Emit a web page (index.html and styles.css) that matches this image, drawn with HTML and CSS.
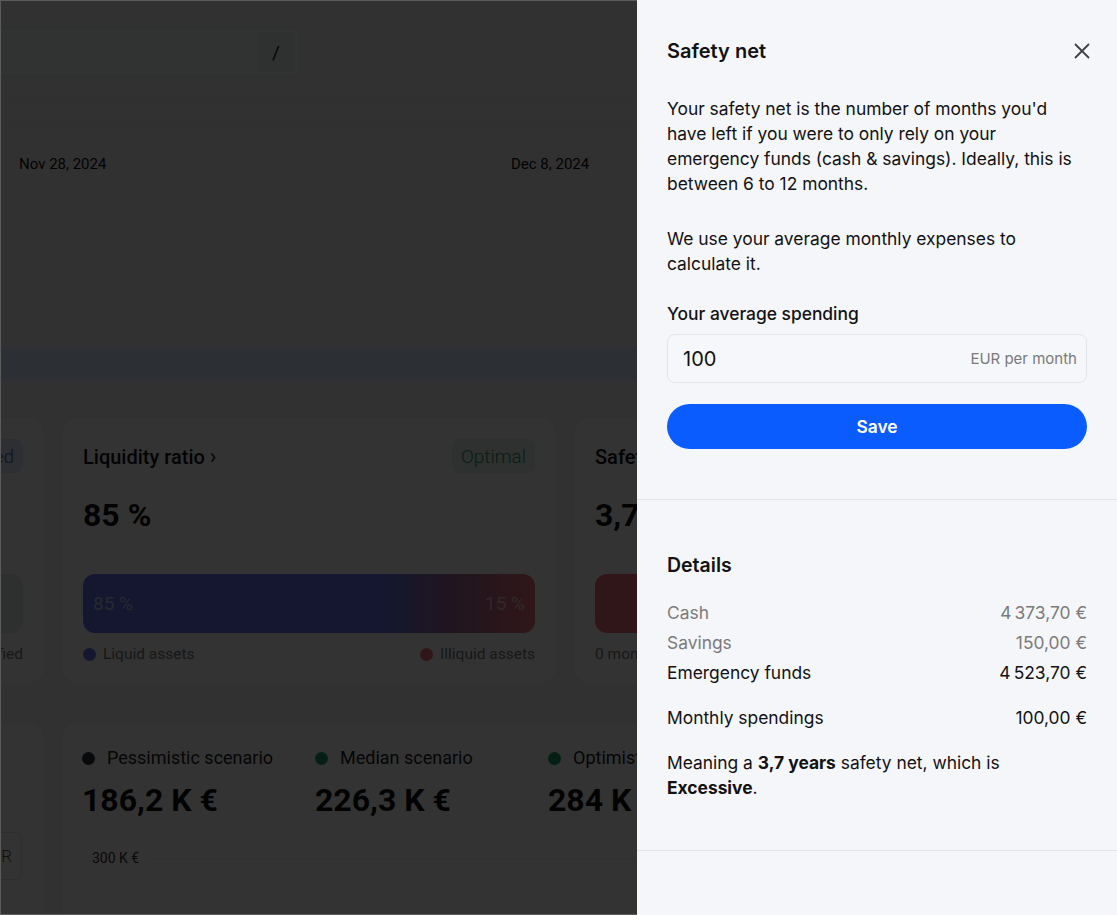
FILE: index.html
```html
<!DOCTYPE html>
<html lang="en">
<head>
<meta charset="utf-8">
<title>Safety net</title>
<link rel="stylesheet" href="styles.css">
</head>
<body>
<div class="page">
  <header class="topbar">
    <div class="search"><span class="kbd">/</span></div>
  </header>
  <section class="chart">
    <div class="chart-band"></div>
    <div class="axis"><span>Nov 28, 2024</span><span>Dec 8, 2024</span></div>
  </section>
  <div class="banner"></div>

  <div class="row row1">
    <div class="card metric">
      <div class="metric-head"><span class="metric-title">Diversification ›</span><span class="badge badge-blue">Diversified</span></div>
      <div class="metric-value">72 %</div>
      <div class="bar bar-gray"></div>
      <div class="legend"><span class="leg"><i class="dot dot-gray"></i>Diversified</span><span class="leg"><i class="dot dot-gray"></i>Unclassified</span></div>
    </div>
    <div class="card metric">
      <div class="metric-head"><span class="metric-title">Liquidity ratio <span class="chev">›</span></span><span class="badge badge-green">Optimal</span></div>
      <div class="metric-value">85 %</div>
      <div class="bar bar-liq"><span>85 %</span><span>15 %</span></div>
      <div class="legend"><span class="leg"><i class="dot dot-blue"></i>Liquid assets</span><span class="leg"><i class="dot dot-red"></i>Illiquid assets</span></div>
    </div>
    <div class="card metric">
      <div class="metric-head"><span class="metric-title">Safety net <span class="chev">›</span></span><span class="badge badge-green">Excessive</span></div>
      <div class="metric-value">3,7 years</div>
      <div class="bar bar-red"></div>
      <div class="legend"><span class="leg">0 months</span><span class="leg">12 months</span></div>
    </div>
  </div>

  <div class="row row2">
    <div class="card side">
      <div class="side-btn">EUR</div>
    </div>
    <div class="card wide">
      <div class="scenarios">
        <div class="scenario"><div class="sc-label"><i class="dot dot-dark"></i>Pessimistic scenario</div><div class="sc-value">186,2 K €</div></div>
        <div class="scenario"><div class="sc-label"><i class="dot dot-green"></i>Median scenario</div><div class="sc-value">226,3 K €</div></div>
        <div class="scenario"><div class="sc-label"><i class="dot dot-green"></i>Optimistic scenario</div><div class="sc-value">284 K €</div></div>
      </div>
      <div class="gridline"><span>300 K €</span><i></i></div>
    </div>
  </div>
</div>

<div class="overlay"></div>

<aside class="drawer">
  <section class="d-section d-top">
    <div class="d-header">
      <h2 class="d-title">Safety net</h2>
      <button class="d-close" aria-label="Close">
        <svg width="16" height="16" viewBox="0 0 16 16"><path d="M1.5 1.5l13 13M14.5 1.5l-13 13" stroke="#404040" stroke-width="1.8" stroke-linecap="round" fill="none"/></svg>
      </button>
    </div>
    <p class="d-text">Your safety net is the number of months you'd have left if you were to only rely on your emergency funds (cash &amp; savings). Ideally, this is between 6 to 12 months.</p>
    <p class="d-text d-text2">We use your average monthly expenses to calculate it.</p>
    <div class="d-label">Your average spending</div>
    <div class="d-input"><span class="d-input-val">100</span><span class="d-input-unit">EUR per month</span></div>
    <button class="d-save">Save</button>
  </section>
  <section class="d-section d-details">
    <h3 class="d-subtitle">Details</h3>
    <div class="d-rows">
      <div class="d-row muted"><span>Cash</span><span>4&#8239;373,70&nbsp;€</span></div>
      <div class="d-row muted"><span>Savings</span><span>150,00&nbsp;€</span></div>
      <div class="d-row"><span>Emergency funds</span><span>4&#8239;523,70&nbsp;€</span></div>
      <div class="d-row d-row-gap"><span>Monthly spendings</span><span>100,00&nbsp;€</span></div>
    </div>
    <p class="d-meaning">Meaning a <b>3,7 years</b> safety net, which is <b>Excessive</b>.</p>
  </section>
</aside>
</body>
</html>
```

FILE: styles.css
```css
* { box-sizing: border-box; }
html, body { margin: 0; padding: 0; }
body {
  width: 1117px;
  height: 915px;
  overflow: hidden;
  background: #f4f5f7;
  font-family: Roboto, "Liberation Sans", sans-serif;
  color: #111;
}

/* ---------- background page ---------- */
.page {
  margin-left: -450px;
  width: 2100px;
}
.topbar { padding-top: 28px; }
.search {
  width: 751px;
  height: 48px;
  border: 1px solid #e6e8ec;
  border-radius: 8px;
  background: #f6f7f9;
  display: flex;
  justify-content: flex-end;
  align-items: center;
  padding-right: 5px;
}
.kbd {
  width: 38px;
  height: 40px;
  border-radius: 6px;
  background: #eceef1;
  display: flex;
  align-items: center;
  justify-content: center;
  font-size: 19px;
  color: #111;
}
.chart { margin-top: 24px; }
.chart-band {
  height: 23px;
  border-top: 1px solid #eaecef;
  border-bottom: 1px solid #eaecef;
  background: #f3f4f6;
}
.axis {
  margin-top: 30px;
  padding-left: 469px;
  display: grid;
  grid-template-columns: repeat(3, 492px);
  font-size: 15px;
  line-height: 22px;
  color: #0d0d0d;
}
.banner {
  margin-top: 173px;
  height: 32px;
  background: #dcebfd;
}

.row { display: flex; gap: 18px; }
.row1 { margin-top: 38px; }
.row2 { margin-top: 40px; }
.card {
  background: #ffffff;
  border-radius: 16px;
  flex: none;
}
.metric {
  width: 494px;
  padding: 21px 21px 18px 21px;
}
.metric-head {
  height: 34px;
  display: flex;
  justify-content: space-between;
  align-items: center;
}
.metric-title { font-size: 20px; font-weight: 500; }
.chev { font-weight: 400; font-size: 22px; }
.badge {
  height: 34px;
  padding: 0 9px;
  border-radius: 7px;
  display: flex;
  align-items: center;
  font-size: 19px;
  font-weight: 300;
}
.badge-green { background: #e8f4ee; color: #2f8f66; }
.badge-blue { background: #e3ecfb; color: #3c64c8; }
.metric-value {
  margin-top: 22px;
  font-size: 32px;
  line-height: 40px;
  font-weight: 700;
}
.bar {
  margin-top: 39px;
  height: 59px;
  border-radius: 12px;
  display: flex;
  justify-content: space-between;
  align-items: center;
  padding: 0 10px;
  font-size: 19px;
  font-weight: 400;
  color: rgba(255,255,255,0.6);
}
.bar-liq { background: linear-gradient(90deg, #6576ea 0%, #6576ea 66%, #a0689a 82%, #f0707c 100%); }
.bar-gray { background: #e6e8ec; }
.bar-red { background: #f2707c; }
.legend {
  margin-top: 10px;
  line-height: 22px;
  display: flex;
  justify-content: space-between;
  font-size: 15.5px;
  color: #777;
}
.leg { display: flex; align-items: center; gap: 7px; }
.dot {
  display: inline-block;
  width: 13px;
  height: 13px;
  border-radius: 50%;
  flex: none;
}
.dot-blue { background: #6576ea; }
.dot-red { background: #f0707c; }
.dot-gray { background: #d5d8de; }
.dot-dark { background: #2b2f38; }
.dot-green { background: #1f9a6a; }

.side {
  width: 494px;
  height: 260px;
  padding: 109px 22px 0 0;
  display: flex;
  justify-content: flex-end;
  align-items: flex-start;
}
.side-btn {
  width: 70px;
  height: 48px;
  border: 1px solid #e3e5e9;
  border-radius: 8px;
  display: flex;
  align-items: center;
  justify-content: flex-end;
  padding-right: 9px;
  font-size: 17px;
  font-weight: 300;
  color: #555;
}
.wide {
  width: 1006px;
  height: 260px;
  padding: 23px 20px 0 20px;
}
.scenarios { display: flex; }
.scenario { width: 233px; }
.sc-label {
  display: flex;
  align-items: center;
  gap: 12px;
  font-size: 18px;
  line-height: 24px;
  color: #222;
}
.sc-value {
  margin-top: 10px;
  font-size: 32px;
  line-height: 40px;
  font-weight: 700;
}
.gridline {
  margin-top: 30px;
  display: flex;
  align-items: center;
  gap: 8px;
  padding-left: 10px;
  font-size: 14px;
  color: #333;
}
.gridline i { flex: 1; height: 1px; background: #eceef1; }

/* ---------- overlay ---------- */
.overlay {
  position: fixed;
  inset: 0;
  background: rgba(0,0,0,0.8);
  border: 1px solid #5c5c5c;
  z-index: 10;
}

/* ---------- drawer ---------- */
.drawer {
  position: fixed;
  top: 0;
  right: 0;
  bottom: 0;
  width: 480px;
  background: #f5f6fa;
  z-index: 20;
  font-family: Inter, "Noto Sans", sans-serif;
  color: #121212;
  font-size: 17.4px;
}
.d-section {
  padding: 30px 30px 50px;
  border-bottom: 1px solid #e2e4e9;
}
.d-header {
  height: 42px;
  display: flex;
  align-items: center;
  justify-content: space-between;
}
.d-title {
  margin: 0;
  font-size: 20px;
  font-weight: 600;
}
.d-close {
  width: 24px;
  height: 24px;
  margin-right: -7px;
  padding: 0;
  border: 0;
  background: none;
  display: flex;
  align-items: center;
  justify-content: center;
}
.d-text {
  margin: 24px 0 0;
  line-height: 25px;
  text-wrap: pretty;
}
.d-text2 { margin-top: 30px; }
.d-label {
  margin-top: 25px;
  line-height: 25px;
  font-weight: 500;
}
.d-input {
  margin-top: 8px;
  height: 49px;
  border: 1px solid #e3e5ea;
  border-radius: 8px;
  background: #f6f7fa;
  display: flex;
  align-items: center;
  justify-content: space-between;
  padding: 0 9px 0 15px;
}
.d-input-val { font-size: 20px; color: #111; }
.d-input-unit { font-size: 15px; color: #7a7a7a; }
.d-save {
  margin-top: 21px;
  width: 100%;
  height: 45px;
  border: 0;
  border-radius: 23px;
  background: #0a5cff;
  color: #fff;
  font-family: Inter, "Noto Sans", sans-serif;
  font-size: 17.4px;
  font-weight: 600;
}
.d-details { padding-top: 53px; }
.d-subtitle {
  margin: 0;
  font-size: 19.5px;
  line-height: 24px;
  font-weight: 600;
}
.d-rows { margin-top: 20px; }
.d-row {
  height: 30px;
  display: flex;
  align-items: center;
  justify-content: space-between;
}
.d-row.muted { color: #7b7b7b; }
.d-row-gap { margin-top: 15px; }
.d-meaning {
  margin: 18px 0 0;
  line-height: 25px;
}
.d-meaning b { font-weight: 700; }
```
